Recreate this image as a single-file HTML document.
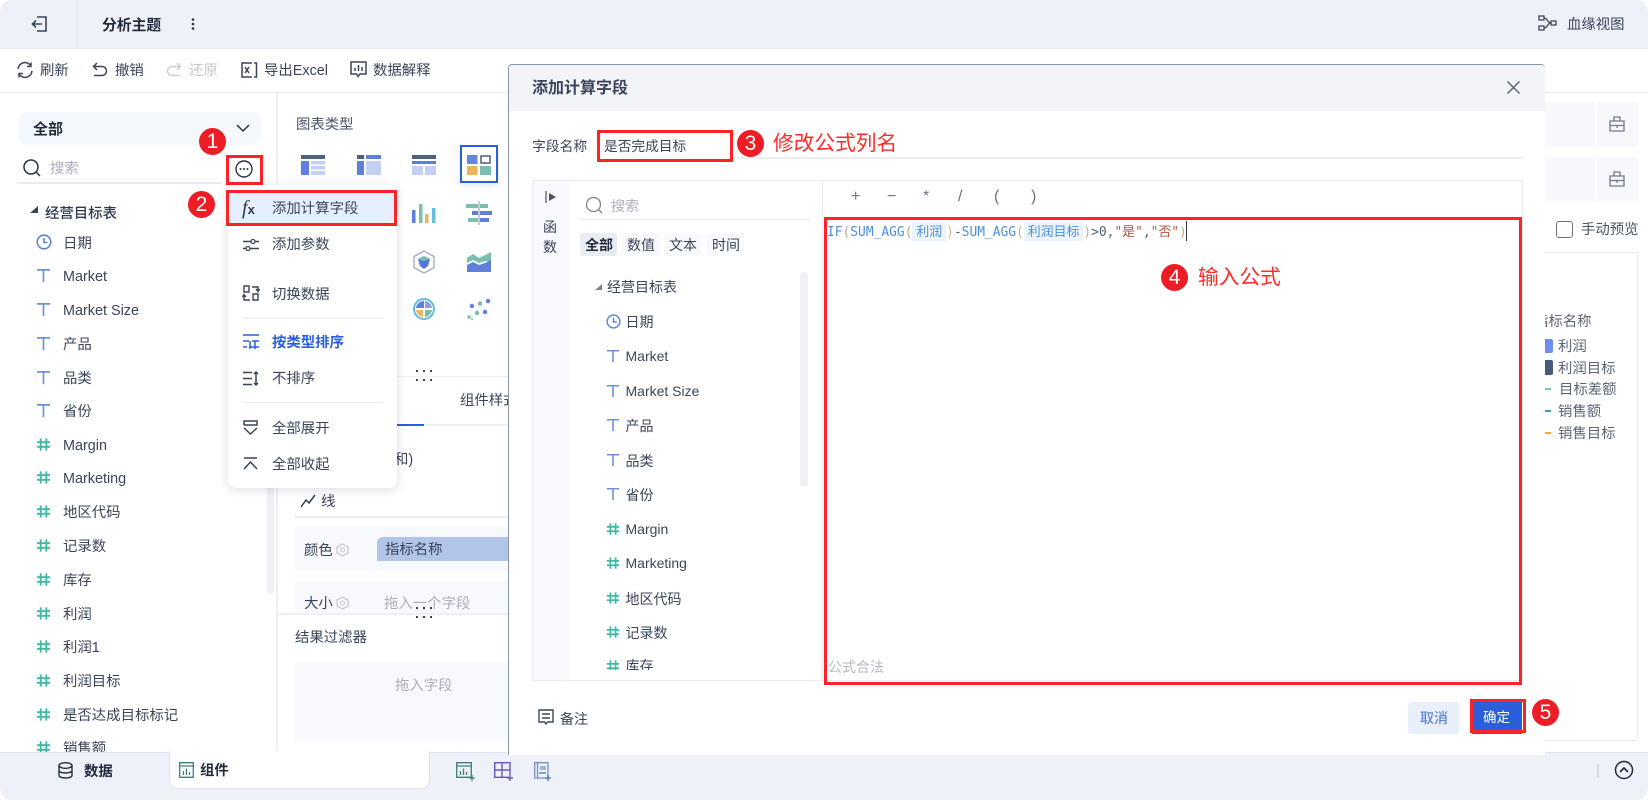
<!DOCTYPE html>
<html lang="zh"><head><meta charset="utf-8"><title>添加计算字段</title>
<style>
html,body{margin:0;padding:0;background:#fff}
#a{position:relative;width:1648px;height:800px;overflow:hidden;background:#fff;border-radius:12px;font-family:"Liberation Sans","Noto Sans CJK SC",sans-serif;font-size:14.4px;color:#3a4559;filter:blur(.35px)}
#a div,#a svg,.t{position:absolute}
.t{white-space:nowrap;line-height:20px;height:20px;margin-top:1px}
.m,#d .t{margin-top:0}
.b{font-weight:700;color:#222c3e}
.g{color:#aab0bb}
.r{color:#ff2a2a;font-size:20.7px;line-height:28px;height:28px}
.m{font-size:14.4px}
.bd{border:3px solid #ff2229;box-sizing:border-box}
.c{width:27px;height:27px;border-radius:50%;background:#ee1c25;color:#fff;font-size:21px;line-height:27px;text-align:center;font-weight:400}
svg{overflow:visible}
.s{fill:none;stroke:#3a4559;stroke-width:1.5}
.k{font-family:"DejaVu Sans Mono","Liberation Mono","Noto Sans CJK SC",monospace;font-size:12.9px;line-height:20px;color:#4b8fdc;white-space:pre}
.k i{font-style:normal;color:#b7b08a}.k b{font-weight:400;background:#edf3fb;padding:2px 4px;color:#4b8fdc;font-family:"Liberation Sans","Noto Sans CJK SC",sans-serif}.k u{text-decoration:none;color:#b5533c}.k s{text-decoration:none;color:#54617a}
.op{color:#6b7384;font-size:16px}
</style></head><body>
<svg width="0" height="0" style="position:absolute"><defs>
<symbol id="T" viewBox="0 0 16 16"><path d="M1 2H15M8 2V15" fill="none" stroke="#6d90d6" stroke-width="1.8"/></symbol>
<symbol id="H" viewBox="0 0 16 16"><path d="M5 1.5V14.500M11 1.500V14.500M1 5.500H15M1 10.500H15" fill="none" stroke="#3fb8a4" stroke-width="2"/></symbol>
<symbol id="C" viewBox="0 0 16 16"><circle cx="8" cy="8" r="6.800" fill="none" stroke="#5f85d6" stroke-width="1.600"/><path d="M8 4V8.500H11.500" fill="none" stroke="#5f85d6" stroke-width="1.600"/></symbol>
</defs></svg>
<div id="a">
<!-- top bar -->
<div style="left:0;top:0;width:1648px;height:49px;background:#eef1f7;border-bottom:1px solid #e6e9ef;box-sizing:border-box"></div>
<div style="left:77px;top:0;width:1px;height:48px;background:#e4e7ee"></div>
<svg style="left:31px;top:15px" width="17" height="18" viewBox="0 0 17 18"><path class="s" d="M6 2H15V16H6M11 9H1.500M5 5.500L1.500 9L5 12.500" style="stroke-width:1.600"/></svg>
<span class="t b" style="left:102px;top:15px;font-size:14.800px">分析主题</span>
<svg style="left:191px;top:18px" width="4" height="12"><circle cx="2" cy="1.500" r="1.300" fill="#333"/><circle cx="2" cy="6" r="1.300" fill="#333"/><circle cx="2" cy="10.500" r="1.300" fill="#333"/></svg>
<svg style="left:1538px;top:15px" width="19" height="16" viewBox="0 0 19 16"><path class="s" d="M1 1H6V5H1ZM1 11H6V15H1ZM13 6H18V10H13ZM6 3C10 3 9 8 13 8M6 13C10 13 9 8 13 8" style="stroke-width:1.300"/></svg>
<span class="t" style="left:1567px;top:14px">血缘视图</span>
<!-- toolbar -->
<div style="left:0;top:92px;width:1648px;height:1px;background:#e8ebf0"></div>
<svg style="left:16px;top:61px" width="18" height="18" viewBox="0 0 18 18"><path class="s" d="M2 8A7 7 0 0 1 15 5M16 10A7 7 0 0 1 3 13M15 1.500V5.500H11M3 16.500V12.500H7" style="stroke-width:1.500"/></svg>
<span class="t" style="left:40px;top:60px">刷新</span>
<svg style="left:92px;top:62px" width="16" height="15" viewBox="0 0 16 15"><path class="s" d="M5 1L1.500 4.500L5 8M2 4.500H10A4.500 4.500 0 0 1 10 13.500H2"/></svg>
<span class="t" style="left:115px;top:60px">撤销</span>
<svg style="left:166px;top:62px" width="16" height="15" viewBox="0 0 16 15"><path d="M11 1L14.500 4.500L11 8M14 4.500H6A4.500 4.500 0 0 0 6 13.500H14" fill="none" stroke="#c9ced6" stroke-width="1.500"/></svg>
<span class="t g" style="left:189px;top:60px;color:#c2c7cf">还原</span>
<svg style="left:241px;top:62px" width="16" height="16" viewBox="0 0 16 16"><path class="s" d="M11 1H1V15H11M13 1H15.500V15H13M4 5L8 11M8 5L4 11"/></svg>
<span class="t" style="left:264px;top:60px">导出Excel</span>
<svg style="left:350px;top:61px" width="17" height="17" viewBox="0 0 17 17"><path class="s" d="M1 1H16V13H10L8 15.500L6.500 13H1ZM5 10V7M8.500 10V4M12 10V6"/></svg>
<span class="t" style="left:373px;top:60px">数据解释</span>
<!-- left panel -->
<div style="left:276px;top:93px;width:2px;height:660px;background:#eef0f5"></div>
<div style="left:18px;top:112px;width:243px;height:33px;background:#f5f8fd;border-radius:9px"></div>
<span class="t b" style="left:33px;top:119px;font-size:15px">全部</span>
<svg style="left:236px;top:124px" width="14" height="8"><path d="M1 1L7 7L13 1" fill="none" stroke="#333" stroke-width="1.500"/></svg>
<svg style="left:22px;top:158px" width="19" height="19"><circle cx="9" cy="9" r="7" fill="none" stroke="#2a3547" stroke-width="1.500"/><path d="M14 14L18 18" stroke="#2a3547" stroke-width="1.500"/></svg>
<span class="t g" style="left:50px;top:158px">搜索</span>
<div style="left:17px;top:182px;width:205px;height:2px;background:#e9ebf0"></div>
<svg style="left:235px;top:160px" width="18" height="18"><circle cx="9" cy="9" r="8" fill="none" stroke="#2a3547" stroke-width="1.400"/><circle cx="5.500" cy="9" r="1" fill="#2a3547"/><circle cx="9" cy="9" r="1" fill="#2a3547"/><circle cx="12.500" cy="9" r="1" fill="#2a3547"/></svg>
<div class="bd" style="left:226px;top:155px;width:37px;height:30px"></div>
<div class="c" style="left:199px;top:128px">1</div>
<svg style="left:30px;top:206px" width="8" height="7"><path d="M0 7L8 7L8 0Z" fill="#3a4559"/></svg>
<span class="t" style="left:45px;top:203px;font-weight:500;color:#2e3a4f">经营目标表</span>
<svg style="left:36px;top:234px" width="16" height="16"><use href="#C"/></svg><span class="t" style="left:63px;top:233px">日期</span>
<svg style="left:36px;top:268px" width="15" height="15"><use href="#T"/></svg><span class="t" style="left:63px;top:266px">Market</span>
<svg style="left:36px;top:302px" width="15" height="15"><use href="#T"/></svg><span class="t" style="left:63px;top:300px">Market Size</span>
<svg style="left:36px;top:336px" width="15" height="15"><use href="#T"/></svg><span class="t" style="left:63px;top:334px">产品</span>
<svg style="left:36px;top:370px" width="15" height="15"><use href="#T"/></svg><span class="t" style="left:63px;top:368px">品类</span>
<svg style="left:36px;top:403px" width="15" height="15"><use href="#T"/></svg><span class="t" style="left:63px;top:401px">省份</span>
<svg style="left:36px;top:437px" width="15" height="15"><use href="#H"/></svg><span class="t" style="left:63px;top:435px">Margin</span>
<svg style="left:36px;top:470px" width="15" height="15"><use href="#H"/></svg><span class="t" style="left:63px;top:468px">Marketing</span>
<svg style="left:36px;top:504px" width="15" height="15"><use href="#H"/></svg><span class="t" style="left:63px;top:502px">地区代码</span>
<svg style="left:36px;top:538px" width="15" height="15"><use href="#H"/></svg><span class="t" style="left:63px;top:536px">记录数</span>
<svg style="left:36px;top:572px" width="15" height="15"><use href="#H"/></svg><span class="t" style="left:63px;top:570px">库存</span>
<svg style="left:36px;top:606px" width="15" height="15"><use href="#H"/></svg><span class="t" style="left:63px;top:604px">利润</span>
<svg style="left:36px;top:639px" width="15" height="15"><use href="#H"/></svg><span class="t" style="left:63px;top:637px">利润1</span>
<svg style="left:36px;top:673px" width="15" height="15"><use href="#H"/></svg><span class="t" style="left:63px;top:671px">利润目标</span>
<svg style="left:36px;top:707px" width="15" height="15"><use href="#H"/></svg><span class="t" style="left:63px;top:705px">是否达成目标标记</span>
<svg style="left:36px;top:740px" width="15" height="15"><use href="#H"/></svg><span class="t" style="left:63px;top:738px">销售额</span>
<div style="left:267px;top:400px;width:7px;height:194px;background:#eff0f4;border-radius:4px"></div>
<!-- middle panel -->
<span class="t" style="left:296px;top:114px;color:#4b5568">图表类型</span>
<svg style="left:301px;top:155px" width="24" height="20"><rect width="24" height="4" fill="#4f5f80"/><rect y="6" width="8" height="14" fill="#5e80dc"/><rect x="10" y="6" width="14" height="3.500" fill="#c3d0f2"/><rect x="10" y="11" width="14" height="3.500" fill="#c3d0f2"/><rect x="10" y="16" width="14" height="4" fill="#c3d0f2"/></svg>
<svg style="left:357px;top:155px" width="24" height="20"><rect width="7" height="4" fill="#4f5f80"/><rect x="9" width="15" height="4" fill="#5e80dc"/><rect y="6" width="7" height="14" fill="#5e80dc"/><rect x="9" y="6" width="15" height="14" fill="#c3d0f2"/></svg>
<svg style="left:412px;top:155px" width="24" height="20"><rect width="24" height="4" fill="#4f5f80"/><rect y="6" width="24" height="3" fill="#5e80dc"/><rect y="11" width="11" height="9" fill="#c3d0f2"/><rect x="13" y="11" width="11" height="9" fill="#c3d0f2"/></svg>
<div style="left:460px;top:145px;width:38px;height:38px;box-sizing:border-box;border:2px solid #2b5fd9;box-shadow:0 2px 6px rgba(60,80,130,.15);background:#fff"></div>
<svg style="left:467px;top:155px" width="24" height="20"><rect width="10.500" height="9" fill="#6585e0"/><rect x="14" y="1" width="9" height="7" fill="none" stroke="#667085" stroke-width="1.700"/><rect y="11" width="10.500" height="9" fill="#edb35d"/><rect x="13" y="11" width="11" height="9" fill="#79bfb0"/></svg>
<svg style="left:412px;top:203px" width="24" height="20"><rect y="7" width="3.500" height="13" fill="#5e80dc"/><rect x="7" y="1" width="3.500" height="19" fill="#79bfb0"/><rect x="13" y="11" width="3.500" height="9" fill="#edb35d"/><rect x="20" y="5" width="3.500" height="15" fill="#62bde0"/></svg>
<svg style="left:466px;top:201px" width="26" height="24"><rect x="12" width="2" height="24" fill="#c5cad3"/><rect y="3" width="12" height="4" fill="#79bfb0"/><rect x="14" y="3" width="8" height="4" fill="#79bfb0"/><rect x="6" y="10" width="6" height="4" fill="#5e80dc"/><rect x="14" y="10" width="12" height="4" fill="#5e80dc"/><rect x="2" y="17" width="10" height="4" fill="#79bfb0"/><rect x="14" y="17" width="9" height="4" fill="#5e80dc"/></svg>
<svg style="left:413px;top:250px" width="22" height="24"><path d="M11 1L21 6.500V17.500L11 23L1 17.500V6.500Z" fill="none" stroke="#a9b2c0" stroke-width="1.500"/><path d="M11 6L17 9L15 16L11 19L7 16L5 9Z" fill="#5578d8"/><path d="M5 9L11 6L17 9L11 11Z" fill="#79bfb0"/></svg>
<svg style="left:467px;top:252px" width="24" height="20"><path d="M0 6L6 2L12 6L18 3L24 0V10L18 9L12 11L6 8L0 11Z" fill="#79bfb0"/><path d="M0 13L6 10L12 13L18 11L24 8V20H0Z" fill="#5e80dc"/></svg>
<svg style="left:412px;top:297px" width="24" height="24"><circle cx="12" cy="12" r="10" fill="none" stroke="#62bde0" stroke-width="2"/><path d="M12 4V11H4A8 8 0 0 1 12 4Z" fill="#5e80dc"/><path d="M13 4A8 8 0 0 1 20 11H13Z" fill="#8ca3e2"/><path d="M4 13H11V20A8 8 0 0 1 4 13Z" fill="#edb35d"/><path d="M13 13H20A8 8 0 0 1 13 20Z" fill="#79bfb0"/></svg>
<svg style="left:467px;top:298px" width="24" height="22"><circle cx="21" cy="3" r="2.200" fill="#5e80dc"/><circle cx="13" cy="5.500" r="2.200" fill="#79bfb0"/><circle cx="5" cy="8" r="2.200" fill="#5e80dc"/><circle cx="18" cy="14" r="2.200" fill="#5e80dc"/><circle cx="10" cy="15" r="2.200" fill="#79bfb0"/><circle cx="2" cy="19" r="1.800" fill="#79bfb0"/><circle cx="5" cy="21" r="1" fill="#79bfb0"/></svg>
<div style="left:397px;top:376px;width:111px;height:1px;background:#eceef3"></div>
<svg style="left:416px;top:370px" width="17" height="13"><g fill="#3a4559"><rect width="2" height="2"/><rect x="7" width="2" height="2"/><rect x="14" width="2" height="2"/><rect y="9" width="2" height="2"/><rect x="7" y="9" width="2" height="2"/><rect x="14" y="9" width="2" height="2"/></g></svg>
<span class="t" style="left:460px;top:390px">组件样式</span>
<div style="left:296px;top:424px;width:212px;height:2px;background:#eef0f4"></div>
<div style="left:296px;top:424px;width:128px;height:2px;background:#2b5fd9"></div>
<span class="t" style="left:394px;top:449px">和)</span>
<svg style="left:300px;top:494px" width="16" height="14"><path d="M1 13L6 6L9 9L15 1" fill="none" stroke="#2e3a4f" stroke-width="1.500"/></svg>
<span class="t" style="left:321px;top:491px">线</span>
<div style="left:295px;top:516px;width:213px;height:2px;background:#eceef3"></div>
<div style="left:295px;top:527px;width:213px;height:44px;background:#f8f9fc"></div>
<span class="t" style="left:304px;top:540px">颜色</span>
<svg style="left:336px;top:543px" width="13" height="14"><path d="M6.500 1L12 4V10L6.500 13L1 10V4Z" fill="none" stroke="#c2c7cf" stroke-width="1.200"/><circle cx="6.500" cy="7" r="2" fill="none" stroke="#c2c7cf"/></svg>
<div style="left:377px;top:537px;width:131px;height:24px;background:#b0c5e8;border-radius:6px 0 0 0"></div>
<span class="t" style="left:385px;top:539px">指标名称</span>
<div style="left:295px;top:581px;width:213px;height:32px;background:#f8f9fc"></div>
<span class="t" style="left:304px;top:593px">大小</span>
<svg style="left:336px;top:596px" width="13" height="14"><path d="M6.500 1L12 4V10L6.500 13L1 10V4Z" fill="none" stroke="#c2c7cf" stroke-width="1.200"/><circle cx="6.500" cy="7" r="2" fill="none" stroke="#c2c7cf"/></svg>
<span class="t g" style="left:384px;top:593px">拖入一个字段</span>
<div style="left:276px;top:613px;width:232px;height:2px;background:#eef0f4"></div>
<svg style="left:416px;top:608px" width="17" height="13"><g fill="#3a4559"><rect width="2" height="2" y="-1"/><rect x="7" y="-1" width="2" height="2"/><rect x="14" y="-1" width="2" height="2"/><rect y="8" width="2" height="2"/><rect x="7" y="8" width="2" height="2"/><rect x="14" y="8" width="2" height="2"/></g></svg>
<span class="t" style="left:295px;top:627px">结果过滤器</span>
<div style="left:295px;top:662px;width:213px;height:80px;background:#f8f9fc"></div>
<span class="t g" style="left:395px;top:675px">拖入字段</span>
<!-- menu -->
<div style="left:228px;top:185px;width:169px;height:303px;background:#fff;border-radius:8px;box-shadow:0 2px 10px rgba(50,65,100,.18)"></div>
<div style="left:228px;top:192px;width:169px;height:31px;background:#e6effd"></div>
<span class="t" style="left:242px;top:197px;font-family:'Liberation Serif',serif;font-style:italic;font-size:20px;color:#2e3a4f">f<span style="font-size:13px;font-style:normal;font-family:'Liberation Sans',sans-serif;font-weight:700">x</span></span>
<span class="t m" style="left:272px;top:199px">添加计算字段</span>
<div class="bd" style="left:226px;top:190px;width:171px;height:36px"></div>
<div class="c" style="left:188px;top:191px">2</div>
<svg style="left:243px;top:238px" width="16" height="14"><path class="s" d="M0 3.500H16M0 10.500H16"/><circle cx="10" cy="3.500" r="2" fill="#fff" stroke="#3a4559" stroke-width="1.300"/><circle cx="5" cy="10.500" r="2" fill="#fff" stroke="#3a4559" stroke-width="1.300"/></svg>
<span class="t m" style="left:272px;top:235px">添加参数</span>
<svg style="left:243px;top:285px" width="16" height="17"><path class="s" d="M1 1H6V7H1ZM10 9H15V15H10ZM9 2H15V6M7 15H1V10M13 4L15 6.500L16.500 4M3 12L1 9.500L-.5 12" style="stroke-width:1.400"/></svg>
<span class="t m" style="left:272px;top:285px">切换数据</span>
<div style="left:243px;top:317px;width:140px;height:2px;background:#f0f2f6"></div>
<svg style="left:243px;top:334px" width="16" height="16"><path d="M0 1H16M0 7H6M9 7H16M0 13H4M6 13H16M7 7V15M12 7V15" fill="none" stroke="#2b5fd9" stroke-width="1.500"/></svg>
<span class="t m" style="left:272px;top:333px;color:#2b5fd9;font-weight:700">按类型排序</span>
<svg style="left:243px;top:371px" width="16" height="15"><path class="s" d="M0 1.500H9M0 7.500H9M0 13.500H9M13 1V14M11 3L13 1L15 3M11 12L13 14L15 12" style="stroke-width:1.500"/></svg>
<span class="t m" style="left:272px;top:369px">不排序</span>
<div style="left:243px;top:402px;width:140px;height:1px;background:#e8ebf0"></div>
<svg style="left:243px;top:420px" width="15" height="15"><path class="s" d="M1 5V1H14V5H1M1 8L7.500 14L14 8"/></svg>
<span class="t m" style="left:272px;top:419px">全部展开</span>
<svg style="left:243px;top:457px" width="15" height="13"><path class="s" d="M1 1H14M1 12L7.500 5L14 12"/></svg>
<span class="t m" style="left:272px;top:455px">全部收起</span>
<!-- right side -->
<div style="left:1545px;top:102px;width:50px;height:45px;background:#f7f8fc"></div>
<div style="left:1597px;top:102px;width:41px;height:45px;background:#f7f8fc"></div>
<div style="left:1545px;top:157px;width:50px;height:44px;background:#f7f8fc"></div>
<div style="left:1597px;top:157px;width:41px;height:44px;background:#f7f8fc"></div>
<svg style="left:1609px;top:116px" width="16" height="16"><path d="M1 5H15V15H1ZM5 5V1H11V5M1 9.500H15M8 9.500V12" fill="none" stroke="#6f7a90" stroke-width="1.300"/></svg>
<svg style="left:1609px;top:171px" width="16" height="16"><path d="M1 5H15V15H1ZM5 5V1H11V5M1 9.500H15M8 9.500V12" fill="none" stroke="#6f7a90" stroke-width="1.300"/></svg>
<div style="left:1556px;top:221px;width:17px;height:17px;box-sizing:border-box;border:1.500px solid #6c7484;border-radius:3px"></div>
<span class="t" style="left:1581px;top:219px;color:#4b5568">手动预览</span>
<div style="left:1545px;top:252px;width:93px;height:489px;box-sizing:border-box;border:1px solid #e8ebf0;border-left:0"></div>
<span class="t" style="left:1534px;top:311px;color:#5c6475">指标名称</span>
<div style="left:1545px;top:339px;width:8px;height:14px;background:#6f8fef;border-radius:0 2px 2px 0"></div>
<span class="t" style="left:1558px;top:336px;color:#5c6475">利润</span>
<div style="left:1545px;top:360px;width:8px;height:15px;background:#465a80;border-radius:0 2px 2px 0"></div>
<span class="t" style="left:1558px;top:358px;color:#5c6475">利润目标</span>
<div style="left:1545px;top:388px;width:6px;height:2px;background:#79c9bb"></div>
<span class="t" style="left:1559px;top:379px;color:#5c6475">目标差额</span>
<div style="left:1545px;top:410px;width:6px;height:2px;background:#3a9ea2"></div>
<span class="t" style="left:1558px;top:401px;color:#5c6475">销售额</span>
<div style="left:1545px;top:432px;width:6px;height:2px;background:#f3a93e"></div>
<span class="t" style="left:1558px;top:423px;color:#5c6475">销售目标</span>
<!-- bottom bar -->
<div style="left:0;top:752px;width:1648px;height:48px;background:#eef1f7;border-top:1px solid #e2e5ec;box-sizing:border-box"></div>
<svg style="left:58px;top:762px" width="15" height="17"><ellipse cx="7.500" cy="3.500" rx="6.500" ry="2.800" fill="none" stroke="#222c3e" stroke-width="1.400"/><path d="M1 3.500V13.500C1 15 4 16 7.500 16S14 15 14 13.500V3.500M1 8.500C1 10 4 11 7.500 11S14 10 14 8.500" fill="none" stroke="#222c3e" stroke-width="1.400"/></svg>
<span class="t b" style="left:84px;top:761px">数据</span>
<div style="left:169px;top:751px;width:261px;height:38px;box-sizing:border-box;background:#fff;border:1px solid #e2e5ec;border-top:0;border-radius:0 0 9px 9px"></div>
<svg style="left:179px;top:762px" width="15" height="16"><path d="M.7.700H14.300V15.300H.7ZM.7 4H14.300" fill="none" stroke="#3f7f7c" stroke-width="1.300"/><path d="M4.500 13V9M7.500 13V6.500M10.500 13V10" stroke="#3f7f7c" stroke-width="1.300"/></svg>
<span class="t b" style="left:200px;top:760px">组件</span>
<svg style="left:456px;top:762px" width="20" height="20"><path d="M.7.700H15.300V15.300H.7ZM.7 4H15.300" fill="none" stroke="#3f7f7c" stroke-width="1.300"/><path d="M4.500 13V9M7.500 13V6.500M10.500 13V10M16 13V19M13 16H19" stroke="#3f7f7c" stroke-width="1.300"/></svg>
<svg style="left:494px;top:762px" width="20" height="20"><path d="M.7.700H16V15.300H.7ZM.7 8H16M8 .7V15.300M16 13V19M13 16H19" fill="none" stroke="#6a55bd" stroke-width="1.400"/></svg>
<svg style="left:534px;top:762px" width="20" height="20"><path d="M.7.700H14V16H.7ZM3.500.7V16" fill="none" stroke="#7492c4" stroke-width="1.300"/><path d="M6 4H12V8H6Z" fill="#9db4da"/><path d="M5 11H12M14 13V19M11 16H17" stroke="#4d6fa8" stroke-width="1.300"/></svg>
<div style="left:1597px;top:764px;width:2px;height:14px;background:#d5d8df"></div>
<svg style="left:1614px;top:760px" width="20" height="20"><circle cx="10" cy="10" r="8.500" fill="none" stroke="#222c3e" stroke-width="1.500"/><path d="M6 12L10 8L14 12" fill="none" stroke="#222c3e" stroke-width="1.700"/></svg>
<!-- modal -->
<div id="d" style="left:0;top:0;font-size:14px">
<div style="left:508px;top:64px;width:1037px;height:691px;background:#fff;border-left:1px solid #8a93a8;border-top:1px solid #8a93a8;box-sizing:border-box;border-radius:4px 4px 0 0"></div>
<div style="left:509px;top:65px;width:1036px;height:46px;background:#f2f4f8;border-radius:4px 4px 0 0"></div>
<span class="t" style="left:532px;top:78px;font-size:16px;font-weight:700;color:#3a4559;line-height:22px;height:22px">添加计算字段</span>
<svg style="left:1507px;top:81px" width="13" height="13"><path d="M.5.5L12.500 12.500M12.500.5L.5 12.500" stroke="#5a6478" stroke-width="1.500"/></svg>
<span class="t" style="left:532px;top:137px;font-size:13.800px">字段名称</span>
<span class="t" style="left:604px;top:137px;font-size:13.700px">是否完成目标</span>
<div class="bd" style="left:597px;top:130px;width:136px;height:32px"></div>
<div style="left:733px;top:157px;width:790px;height:2px;background:#eceef2"></div>
<div class="c" style="left:737px;top:130px">3</div>
<span class="t r" style="left:773px;top:130px">修改公式列名</span>
<div style="left:532px;top:180px;width:991px;height:501px;box-sizing:border-box;border:1px solid #e8ebf0;background:#fff"></div>
<div style="left:533px;top:181px;width:36px;height:499px;background:#f7f9fd"></div>
<div style="left:822px;top:181px;width:1px;height:499px;background:#e8ebf0"></div>
<svg style="left:545px;top:191px" width="12" height="12"><path d="M1 0V12" stroke="#4b5568" stroke-width="1.200"/><path d="M4 2L11 6L4 10Z" fill="#4b5568"/></svg>
<span class="t" style="left:543px;top:217px">函</span>
<span class="t" style="left:543px;top:237px">数</span>
<svg style="left:585px;top:196px" width="18" height="18"><circle cx="8.500" cy="8.500" r="7" fill="none" stroke="#7c8494" stroke-width="1.300"/><path d="M13.500 13.500L17 17" stroke="#7c8494" stroke-width="1.300"/></svg>
<span class="t g" style="left:611px;top:196px">搜索</span>
<div style="left:580px;top:219px;width:230px;height:1px;background:#e8ebf0"></div>
<div style="left:580px;top:233px;width:37px;height:23px;background:#e9edf3;border-radius:3px"></div>
<div style="left:622px;top:233px;width:38px;height:23px;background:#f8f9fc;border-radius:3px"></div>
<div style="left:665px;top:233px;width:36px;height:23px;background:#f8f9fc;border-radius:3px"></div>
<div style="left:707px;top:233px;width:37px;height:23px;background:#f8f9fc;border-radius:3px"></div>
<span class="t b" style="left:585px;top:235px">全部</span>
<span class="t" style="left:627px;top:235px">数值</span>
<span class="t" style="left:669px;top:235px">文本</span>
<span class="t" style="left:712px;top:235px">时间</span>
<svg style="left:595px;top:284px" width="7" height="6"><path d="M0 6L7 6L7 0Z" fill="#7c8494"/></svg>
<span class="t" style="left:607px;top:277px">经营目标表</span>
<svg style="left:606px;top:314px" width="15" height="15"><use href="#C"/></svg><span class="t" style="left:625.500px;top:312px">日期</span>
<svg style="left:606px;top:349px" width="14" height="14"><use href="#T"/></svg><span class="t" style="left:625.500px;top:346px">Market</span>
<svg style="left:606px;top:384px" width="14" height="14"><use href="#T"/></svg><span class="t" style="left:625.500px;top:381px">Market Size</span>
<svg style="left:606px;top:418px" width="14" height="14"><use href="#T"/></svg><span class="t" style="left:625.500px;top:416px">产品</span>
<svg style="left:606px;top:453px" width="14" height="14"><use href="#T"/></svg><span class="t" style="left:625.500px;top:451px">品类</span>
<svg style="left:606px;top:487px" width="14" height="14"><use href="#T"/></svg><span class="t" style="left:625.500px;top:485px">省份</span>
<svg style="left:606px;top:522px" width="14" height="14"><use href="#H"/></svg><span class="t" style="left:625.500px;top:519px">Margin</span>
<svg style="left:606px;top:556px" width="14" height="14"><use href="#H"/></svg><span class="t" style="left:625.500px;top:553px">Marketing</span>
<svg style="left:606px;top:591px" width="14" height="14"><use href="#H"/></svg><span class="t" style="left:625.500px;top:589px">地区代码</span>
<svg style="left:606px;top:625px" width="14" height="14"><use href="#H"/></svg><span class="t" style="left:625.500px;top:623px">记录数</span>
<svg style="left:606px;top:659px" width="14" height="14"><use href="#H"/></svg><span class="t" style="left:625.500px;top:656px">库存</span>
<div style="left:570px;top:670px;width:250px;height:10px;background:#fff"></div>
<div style="left:800px;top:272px;width:8px;height:215px;background:#f0f1f5;border-radius:4px"></div>
<span class="t op" style="left:851px;top:187px">+</span>
<span class="t op" style="left:887px;top:187px">−</span>
<span class="t op" style="left:923px;top:187px">*</span>
<span class="t op" style="left:958px;top:187px">/</span>
<span class="t op" style="left:994px;top:187px">(</span>
<span class="t op" style="left:1031px;top:187px">)</span>
<span class="t k" style="left:827px;top:222px">IF<i>(</i>SUM_AGG<i>(</i><b>利润</b><i>)</i><s>-</s>SUM_AGG<i>(</i><b>利润目标</b><i>)</i><s>&gt;0,</s><u>"是"</u><s>,</s><u>"否"</u><i>)</i></span>
<div style="left:1186px;top:221px;width:1px;height:20px;background:#333"></div>
<div class="bd" style="left:824px;top:217px;width:698px;height:468px"></div>
<div class="c" style="left:1161px;top:264px">4</div>
<span class="t r" style="left:1198px;top:264px">输入公式</span>
<span class="t" style="left:828px;top:657px;color:#b5b9c2">公式合法</span>
<svg style="left:538px;top:709px" width="16" height="17"><path class="s" d="M1 1H15V13H9.500L8 15L6.500 13H1ZM4 5H12M4 9H12" style="stroke-width:1.400"/></svg>
<span class="t" style="left:560px;top:709px">备注</span>
<div style="left:1408px;top:702px;width:51px;height:32px;background:#e9effb;border-radius:3px"></div>
<span class="t" style="left:1420px;top:708px;color:#5f86d9;font-weight:500">取消</span>
<div style="left:1472px;top:702px;width:50px;height:32px;background:#2b5fd9"></div>
<span class="t" style="left:1483px;top:708px;color:#fff;font-size:13.500px">确定</span>
<div class="bd" style="left:1470px;top:699px;width:56px;height:34px"></div>
<div class="c" style="left:1532px;top:699px">5</div>
</div>
</div>
</body></html>
